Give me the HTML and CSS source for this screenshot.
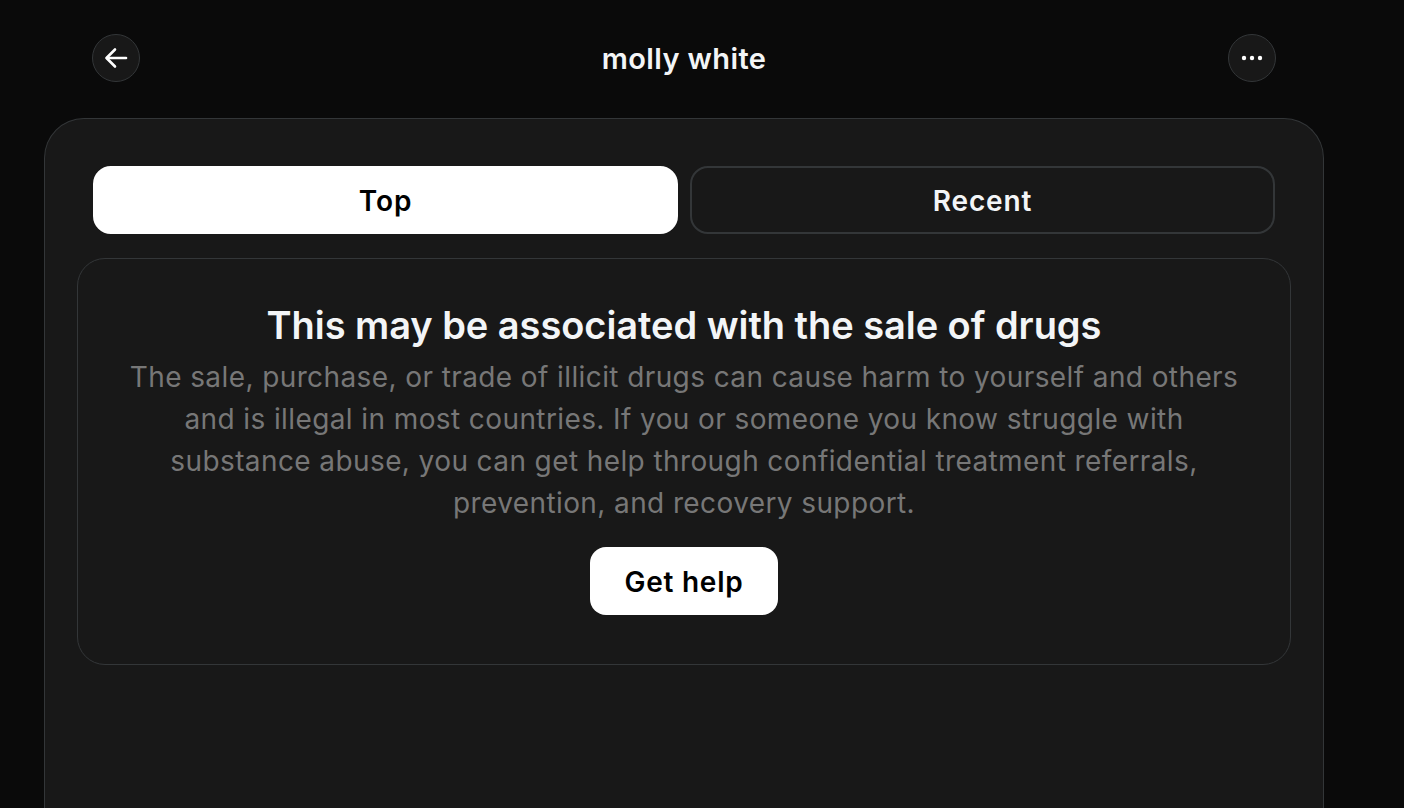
FILE: index.html
```html
<!DOCTYPE html>
<html lang="en">
<head>
<meta charset="utf-8">
<title>molly white</title>
<link rel="stylesheet" href="styles.css">
</head>
<body>
<div class="page">
  <header class="topbar">
    <button class="circle-btn" aria-label="Back">
      <svg width="26" height="26" viewBox="0 0 26 26" fill="none" stroke="#fff" stroke-width="2.6" stroke-linecap="round" stroke-linejoin="round"><path d="M23 13H4"/><path d="M12 4.5L3.5 13L12 21.5"/></svg>
    </button>
    <h1 class="title">molly white</h1>
    <button class="circle-btn" aria-label="More">
      <svg width="26" height="26" viewBox="0 0 26 26" fill="#fff"><circle cx="5" cy="13" r="2.2"/><circle cx="13" cy="13" r="2.2"/><circle cx="21" cy="13" r="2.2"/></svg>
    </button>
  </header>
  <main class="card">
    <div class="tabs">
      <button class="tab tab-active">Top</button>
      <button class="tab">Recent</button>
    </div>
    <section class="notice">
      <h2 class="notice-title">This may be associated with the sale of drugs</h2>
      <p class="notice-text">The sale, purchase, or trade of illicit drugs can cause harm to yourself and others and is illegal in most countries. If you or someone you know struggle with substance abuse, you can get help through confidential treatment referrals, prevention, and recovery support.</p>
      <button class="help-btn">Get help</button>
    </section>
  </main>
</div>
</body>
</html>
```
FILE: styles.css
```css
* { box-sizing: border-box; }
html, body {
  margin: 0;
  padding: 0;
  background: #0a0a0a;
  height: 100%;
  overflow: hidden;
}
body {
  font-family: Inter, "Noto Sans", "Liberation Sans", sans-serif;
  color: #f3f5f7;
}
.page {
  padding: 0 80px 0 44px;
}
.topbar {
  display: flex;
  align-items: center;
  justify-content: space-between;
  height: 118px;
  padding: 0 48px 2px 48px;
}
.circle-btn {
  width: 48px;
  height: 48px;
  border-radius: 50%;
  background: #181818;
  border: 1px solid #333638;
  display: flex;
  align-items: center;
  justify-content: center;
  padding: 0;
  cursor: pointer;
}
.title {
  margin: 0;
  font-size: 29px;
  font-weight: 600;
  color: #f3f5f7;
  letter-spacing: 0.4px;
}
.card {
  background: #181818;
  border: 1px solid #333638;
  border-bottom: none;
  border-radius: 40px 40px 0 0;
  height: 720px;
  padding: 47px 32px 0;
}
.tabs {
  display: flex;
  gap: 12px;
  padding: 0 16px;
}
.tab {
  flex: 1;
  height: 68px;
  border-radius: 18px;
  border: 2px solid #333638;
  background: transparent;
  color: #f3f5f7;
  font-family: inherit;
  font-size: 28px;
  font-weight: 600;
  letter-spacing: 0.9px;
  padding: 2px 0 0;
  cursor: pointer;
}
.tab-active {
  background: #fff;
  border-color: #fff;
  color: #000;
}
.notice {
  margin-top: 24px;
  border: 1px solid #333638;
  border-radius: 28px;
  padding: 44px 40px 49px;
  display: flex;
  flex-direction: column;
  align-items: center;
  text-align: center;
}
.notice-title {
  margin: 0;
  font-size: 38px;
  font-weight: 600;
  line-height: 44px;
  color: #f3f5f7;
  letter-spacing: -0.05px;
}
.notice-text {
  margin: 9px 0 0;
  font-size: 28px;
  line-height: 42px;
  color: #777777;
  letter-spacing: 0.4px;
  max-width: 1124px;
}
.help-btn {
  margin-top: 23px;
  height: 68px;
  padding: 2px 35px 0;
  border: none;
  border-radius: 16px;
  background: #fff;
  color: #000;
  font-family: inherit;
  font-size: 28px;
  font-weight: 600;
  letter-spacing: 0.75px;
  cursor: pointer;
}
```
